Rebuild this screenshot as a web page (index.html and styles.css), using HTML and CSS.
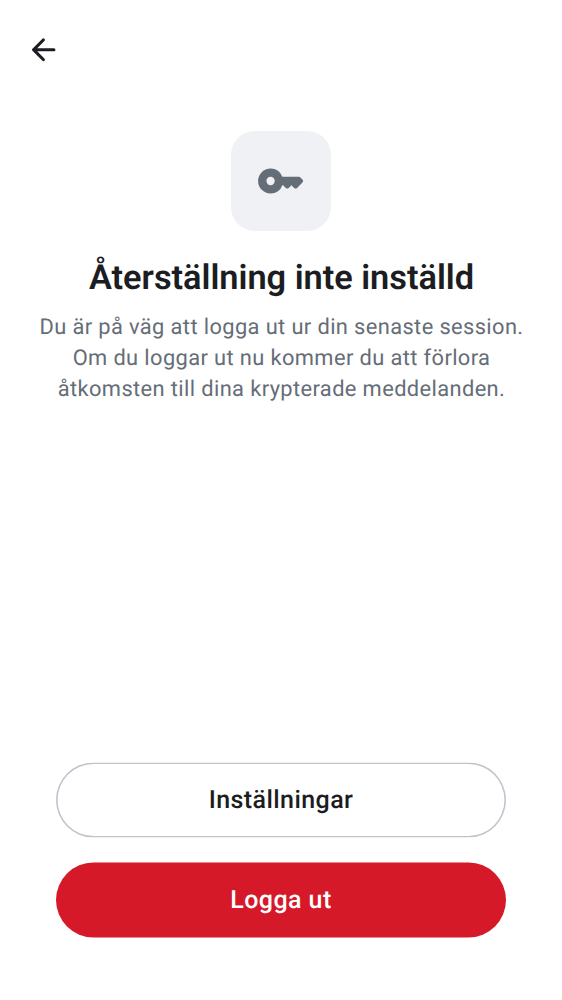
FILE: index.html
```html
<!DOCTYPE html>
<html lang="sv">
<head>
<meta charset="utf-8">
<title>Återställning inte inställd</title>
<link rel="stylesheet" href="styles.css">
</head>
<body>
<div class="screen">
  <header class="top-bar">
    <svg class="back" viewBox="0 0 24 24" aria-label="Tillbaka"><path d="M11.150 19.100 4.750 12.700a.96.96 0 0 1 0-1.400l6.400-6.400a1 1 0 0 1 1.400 1.400L7.850 11H18.500a1 1 0 1 1 0 2H7.850l4.700 4.700a1 1 0 0 1-1.400 1.400Z"/></svg>
  </header>
  <main class="content">
    <div class="key-tile">
      <svg class="key" viewBox="0 0 24 24"><path d="M7 18q-2.500 0-4.250-1.750T1 12t1.750-4.250T7 6q2 0 3.550 1.100A5.900 5.900 0 0 1 12.650 10H20.600a1 1 0 0 1 .7.300l1 1a1 1 0 0 1 0 1.400l-2.600 2.600a1 1 0 0 1-1.400 0L17 14l-1.300 1.300a1 1 0 0 1-1.400 0L13 14h-.350a5.900 5.900 0 0 1-2.100 2.900Q9 18 7 18m0-4q.825 0 1.412-.588T9 12t-.588-1.412T7 10t-1.412.588T5 12t.588 1.412T7 14"/></svg>
    </div>
    <h1 class="title">Återställning inte inställd</h1>
    <p class="description">Du är på väg att logga ut ur din senaste session.<br>Om du loggar ut nu kommer du att förlora<br>åtkomsten till dina krypterade meddelanden.</p>
  </main>
  <footer class="actions">
    <button class="button outlined">Inställningar</button>
    <button class="button danger">Logga ut</button>
  </footer>
</div>
</body>
</html>
```

FILE: styles.css
```css
* { box-sizing: border-box; }
body { margin: 0; background: #fff; font-family: Roboto, sans-serif; color: #1b1d22; text-rendering: geometricPrecision; }
.screen { height: 1000px; display: flex; flex-direction: column; }
.top-bar { height: 100px; padding: 31px 25px; flex: none; }
.back { display: block; width: 37.5px; height: 37.5px; fill: #1b1d22; }
.content { flex: 1; padding-top: 31px; display: flex; flex-direction: column; align-items: center; text-align: center; }
.key-tile { width: 100px; height: 100px; border-radius: 24px; background: #f0f1f5; display: grid; place-items: center; }
.key { width: 50px; height: 50px; fill: #656d77; }
.title { margin: 27px 0 0; padding-left: 1px; font-size: 34.375px; line-height: 40px; font-weight: 600; letter-spacing: -.02px; white-space: nowrap; }
.description { margin: 14px 0 0; padding-left: 1px; font-size: 21.875px; line-height: 31px; letter-spacing: .38px; color: #656d77; white-space: nowrap; }
.actions { padding: 0 56px 62px; display: flex; flex-direction: column; gap: 25px; transform: translateY(-.5px); }
.button { height: 75px; padding: 0; border: 0; border-radius: 37.5px; font: 500 25px/36px Roboto, sans-serif; letter-spacing: .43px; text-rendering: inherit; }
.outlined { background: #fff; color: #1b1d22; box-shadow: inset 0 0 0 1.56px #bdc4cc; }
.danger { background: #d51928; color: #fff; }
```
